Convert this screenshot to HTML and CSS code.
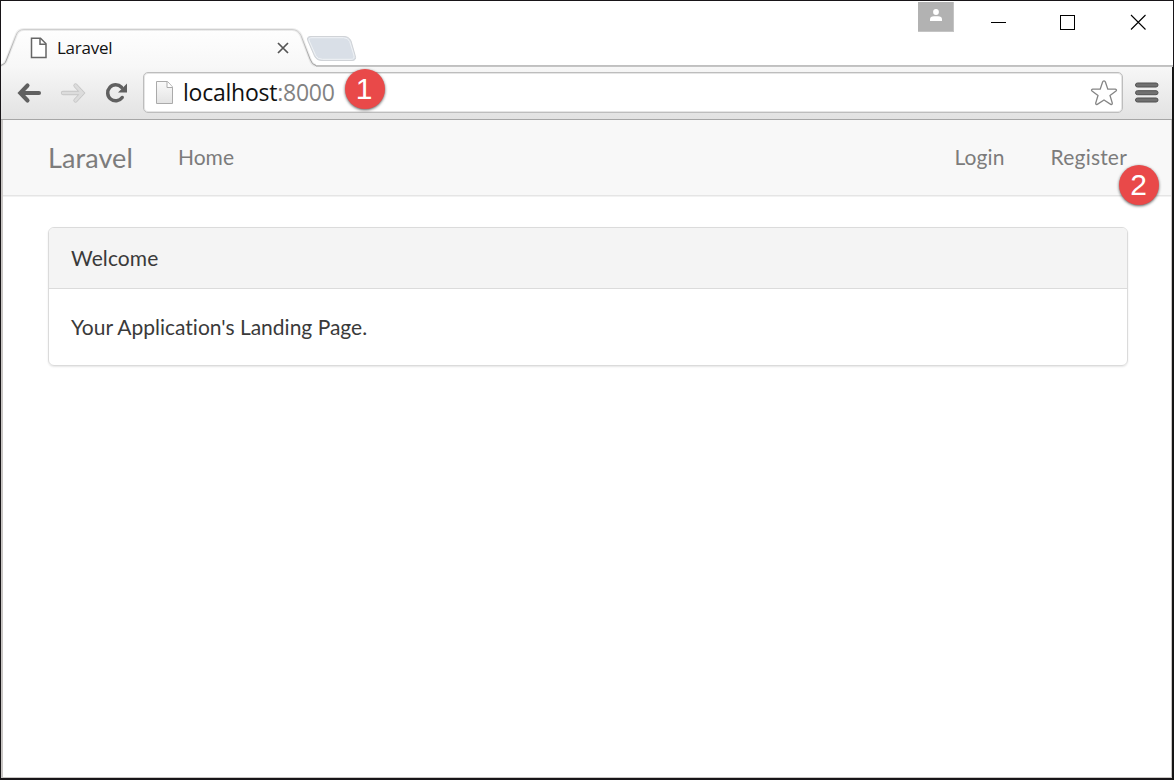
FILE: index.html
```html
<!DOCTYPE html>
<html lang="en">
<head>
<meta charset="utf-8">
<title>Laravel</title>
<link rel="stylesheet" href="styles.css">
</head>
<body>
<div class="window">
  <header class="titlebar">
    <div class="tab">
      <svg class="tab-shape" width="371" height="68" viewBox="1 0 371 68">
        <defs>
          <linearGradient id="tabfill" x1="0" y1="0" x2="0" y2="1"><stop offset="0" stop-color="#fefefe"/><stop offset="1" stop-color="#f7f7f7"/></linearGradient>
          <linearGradient id="shade" x1="0" y1="0" x2="0" y2="1"><stop offset="0" stop-color="#cfcfcf"/><stop offset="1" stop-color="#9c9c9c"/></linearGradient>
        </defs>
        <path d="M0 65.500C3 65 5 63.500 6 61L16 35.500Q18 29.500 24 29.500H292Q298 29.500 301 35.500L310 59Q312 65 316 65.500V68H0Z" fill="url(#tabfill)"/>
        <path d="M0 65.500C3 65 5 63.500 6 61L16 35.500Q18 29.500 24 29.500H292Q298 29.500 301 35.500L310 59Q312 65 316 65.500" fill="none" stroke="#888" stroke-opacity=".15" stroke-width="3"/>
        <path d="M0 65.500C3 65 5 63.500 6 61L16 35.500Q18 29.500 24 29.500H292Q298 29.500 301 35.500L310 59Q312 65 316 65.500" fill="none" stroke="url(#shade)"/>
        <path d="M311 36.500H344Q349 36.500 351 41L355 55Q357 60.500 352 60.500H322Q316.500 60.500 314.500 56L308 41Q306 36.500 311 36.500Z" fill="#d9dfe7" stroke="#d0d3d7"/>
        <path d="M312 37.700H343.500Q348 37.700 349.700 41.500L353.800 55Q355 59.300 351 59.300H322.500Q317.500 59.300 315.700 55.500L309.300 41Q308 37.700 312 37.700Z" fill="none" stroke="#eff2f5"/>
      </svg>
      <svg class="tab-page" width="18" height="22" viewBox="0 0 18 22"><path d="M1.500 1.200H10.500L16 6.800V20.500H1.500Z" fill="#fff" stroke="#666" stroke-width="1.500"/><path d="M10 1V7.200H16" fill="none" stroke="#666" stroke-width="1.500"/></svg>
      <span class="tab-title">Laravel</span>
      <svg class="tab-close" width="12" height="12" viewBox="0 0 12 12"><path d="M1 1L11 11M11 1L1 11" stroke="#555" stroke-width="1.700"/></svg>
    </div>
    <div class="controls">
      <div class="user"><svg width="12" height="12" viewBox="0 0 12 12"><circle cx="6" cy="3" r="2.900" fill="#fff"/><path d="M0 12V10.500Q0 7.300 4 7.300H8Q12 7.300 12 10.500V12Z" fill="#fff"/></svg></div>
      <svg class="controls-icons" width="156" height="17" viewBox="0 0 156 17" fill="none" stroke="#000" shape-rendering="crispEdges"><path d="M0 8.500H15M69.500 1.500H83.500V15.500H69.500Z"/><path d="M140 1L154.500 15.500M154.500 1L140 15.500" stroke-width="1.100" shape-rendering="auto"/></svg>
    </div>
  </header>
  <div class="toolbar">
    <svg class="nav-icons" width="126" height="28" viewBox="0 0 126 28" fill="none">
      <path d="M22 14H4M10.500 6.500L3.300 14L10.500 21.500" stroke="#606060" stroke-width="4.100" stroke-linecap="round"/>
      <path d="M46 14H65M58.500 6.500L65.500 14L58.500 21.500" stroke="#c6c6c6" stroke-width="4.300" stroke-linecap="round"/>
      <path d="M46 14H65M58.500 6.500L65.500 14L58.500 21.500" stroke="#dcdcdc" stroke-width="2.600" stroke-linecap="round"/>
      <path d="M104.500 8.300A8 8 0 1 0 105.200 18.500" stroke="#606060" stroke-width="3.500" stroke-linecap="round"/>
      <path d="M110 4.500V13.500H101Z" fill="#606060"/>
    </svg>
    <div class="omnibox">
      <svg class="url-page" width="18" height="24" viewBox="0 0 18 24"><defs><linearGradient id="pg" x1="0" y1="0" x2="0" y2="1"><stop stop-color="#fafafa"/><stop offset="1" stop-color="#e3e3e3"/></linearGradient></defs><path d="M.5.500H11.500L16.500 6V22.500H.5Z" fill="url(#pg)" stroke="#aaa"/><path d="M11 .5V6.500H16.500" fill="#fff" stroke="#aaa"/></svg>
      <span class="url">localhost<span class="port">:8000</span></span>
      <svg class="star" width="28" height="28" viewBox="0 0 28 28"><path d="M14 1.800Q15 1.800 15.400 3L17.800 10.100L25.300 10.200Q27.300 10.800 26 12L20 16.400L22.300 24Q22.400 26 20.700 25.300L14 21L7.300 25.300Q5.600 26 5.700 24L8 16.400L2 12Q.7 10.800 2.700 10.200L10.200 10.100L12.600 3Q13 1.800 14 1.800Z" fill="#fff" stroke="#858585" stroke-width="1.300"/></svg>
    </div>
    <svg class="menu" width="24" height="22" viewBox="0 0 24 22"><g fill="#707070" stroke="#505050"><rect x=".5" y="1" width="22.500" height="4" rx="2"/><rect x=".5" y="8.700" width="22.500" height="4" rx="2"/><rect x=".5" y="16" width="22.500" height="4" rx="2"/></g></svg>
  </div>
  <main class="page">
    <nav class="navbar">
      <a class="brand">Laravel</a>
      <a class="link">Home</a>
      <a class="link login">Login</a>
      <a class="link register">Register</a>
    </nav>
    <section class="panel">
      <div class="panel-heading">Welcome</div>
      <div class="panel-body">Your Application's Landing Page.</div>
    </section>
  </main>
</div>
<span class="marker marker-one">1</span>
<span class="marker marker-two">2</span>
</body>
</html>
```
FILE: styles.css
```css
* { box-sizing: border-box; }
body { margin: 0; position: relative; background: #fff; font-family: Lato, sans-serif; font-variant-ligatures: none; }
.window { height: 780px; border: 1px solid #181518; border-bottom-width: 2px; display: flex; flex-direction: column; }
.titlebar { height: 66px; flex: none; display: flex; justify-content: space-between; border-bottom: 1px solid #c4c4c4; box-shadow: inset 0 -1px #c0c0c0; }
.tab { position: relative; width: 372px; height: 66px; padding: 36px 0 0 29px; display: flex; align-items: flex-start; }
.tab-shape { position: absolute; left: 0; top: -1px; }
.tab-page, .tab-title, .tab-close { position: relative; }
.tab-title { width: 220px; margin-left: 9px; font: 17px/22px "Open Sans", sans-serif; letter-spacing: -.25px; color: #111; }
.tab-close { margin-top: 5px; }
.controls { display: flex; align-items: flex-start; padding: 1px 26px 0 0; }
.user { width: 36px; height: 30px; background: #b2b2b2; border: 1px solid #c4c4c4; border-width: 0 1px 1px 0; display: flex; justify-content: center; padding-top: 7px; margin-right: 37px; }
.controls-icons { margin-top: 12px; }
.toolbar { height: 53px; flex: none; margin-right: 1px; padding-bottom: 1px; display: flex; align-items: center; background: linear-gradient(#f7f7f7, #e2e2e2); border-bottom: 1px solid #a6a6a6; }
.nav-icons { margin: 1px 0 0 16px; flex: none; }
.omnibox { width: 980px; height: 41px; background: #fff; border: 1px solid #bdbdbd; border-radius: 5px; box-shadow: inset 0 0 0 1px #e5e5e5; display: flex; align-items: center; padding: 0 4px 0 12px; }
.url { flex: 1; margin: -1px 0 0 9px; font: 23px/36px "Open Sans", sans-serif; letter-spacing: -.24px; color: #111; white-space: nowrap; }
.port { color: #828282; }
.menu { margin: 1px 0 0 12px; }
.page { flex: 1; margin-right: 1px; border: solid #c9c6c4; border-width: 0 1px 1px 2px; }
.navbar { height: 77px; padding: 0 44px 1px 45px; background: #f8f8f8; border-bottom: 1px solid #f2f2f2; box-shadow: inset 0 -1px #e5e5e5; display: flex; align-items: center; color: #7c7c7c; }
.brand { font-size: 27px; line-height: 36px; width: 130px; margin-top: 1px; letter-spacing: .1px; }
.link { font-size: 21px; line-height: 30px; margin-top: -1px; }
.login { margin-left: auto; letter-spacing: .1px; }
.register { margin-left: 46px; letter-spacing: .2px; }
.panel { margin: 30px 43px 0 45px; height: 139px; border: 1px solid #dbdbdb; border-radius: 6px; box-shadow: 0 1px 2px rgba(0,0,0,.1); overflow: hidden; font-size: 21px; line-height: 30px; color: #3a3a3a; }
.panel-heading { height: 61px; padding: 15px 22px; background: #f4f4f4; border-bottom: 1px solid #dbdbdb; letter-spacing: .1px; }
.panel-body { padding: 23px 22px; }
.marker { position: absolute; width: 40px; height: 40px; border-radius: 50%; background: #e94949; color: #fff; text-align: center; font: 30px/40px "Liberation Sans", sans-serif; box-shadow: 0 1px 3px rgba(0,0,0,.65); }
.marker-one { left: 345px; top: 69px; padding-right: 2px; }
.marker-two { left: 1119px; top: 165px; padding-right: 1px; }
.window::after { content: ""; position: absolute; top: 67px; right: 0; width: 2px; height: 713px; background: #151515; }
```
